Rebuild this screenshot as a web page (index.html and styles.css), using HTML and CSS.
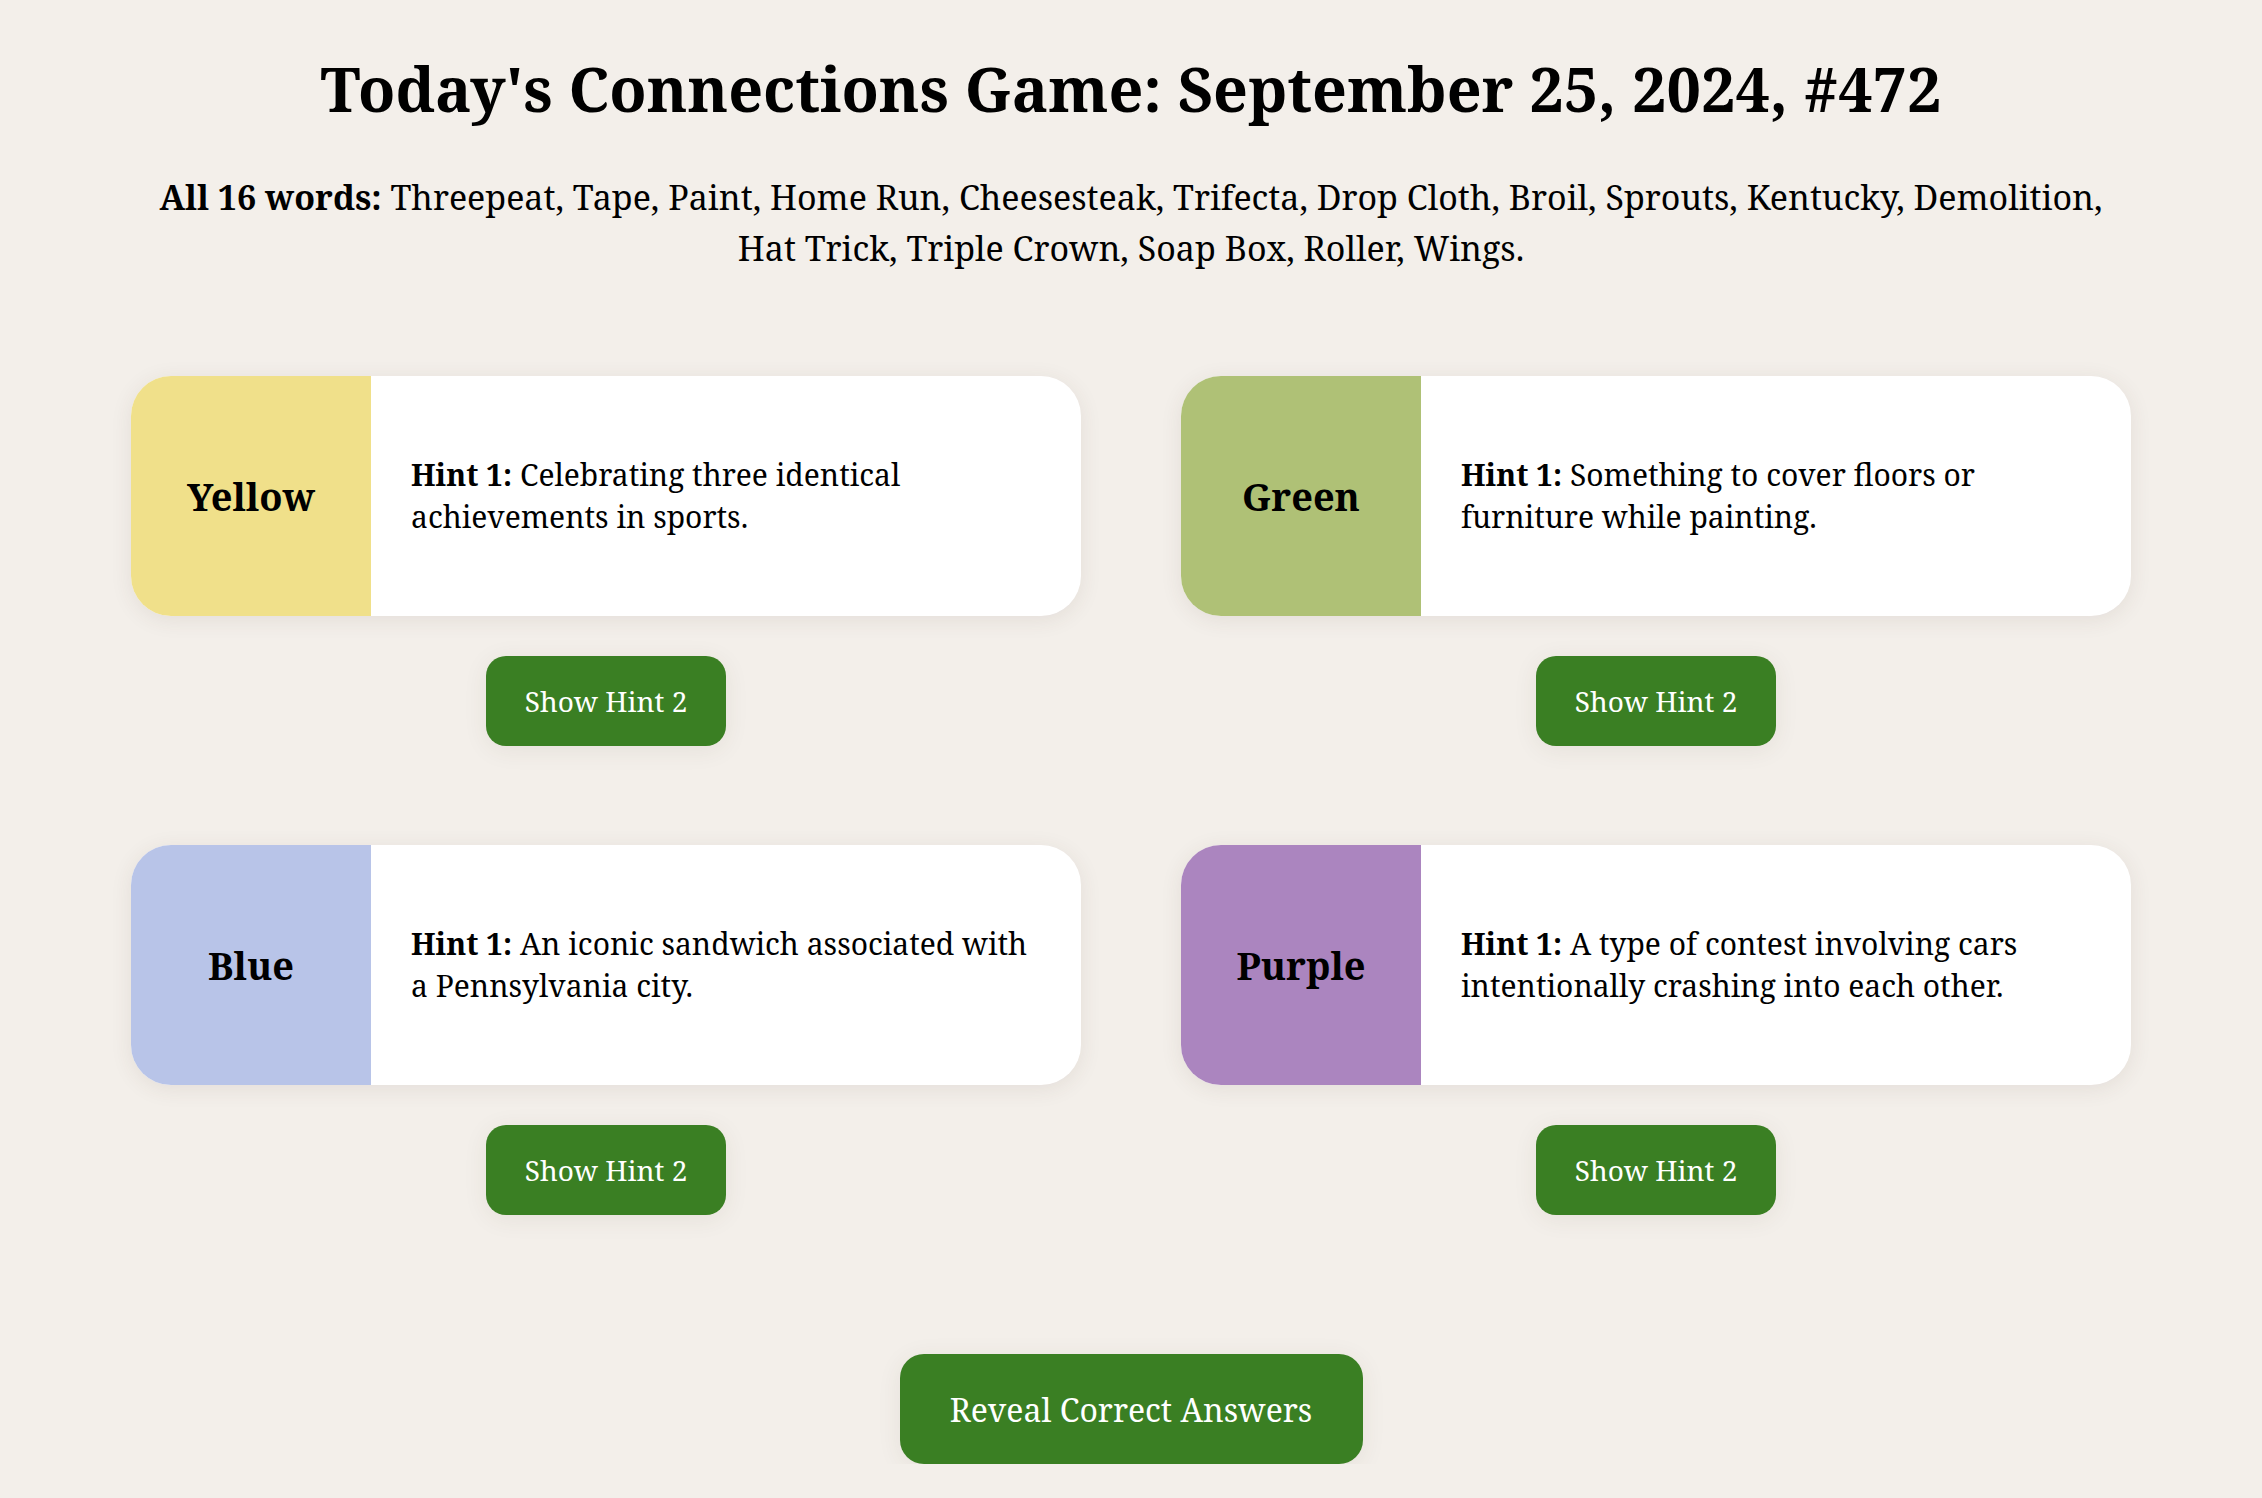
FILE: index.html
```html
<!DOCTYPE html>
<html lang="en">
<head>
    <meta charset="UTF-8">
    <meta name="viewport" content="width=device-width, initial-scale=1.0">
    <title>Connections Hints</title>
    <link rel="stylesheet" href="styles.css">
</head>
<body>
    <main class="page">
        <h1>Today's Connections Game: September 25, 2024, #472</h1>
        <p class="words"><strong>All 16 words:</strong> Threepeat, Tape, Paint, Home Run, Cheesesteak, Trifecta, Drop Cloth, Broil, Sprouts, Kentucky, Demolition, Hat Trick, Triple Crown, Soap Box, Roller, Wings.</p>

        <div class="groups">
            <div class="group">
                <div class="card">
                    <div class="label yellow">Yellow</div>
                    <p class="hint"><strong>Hint 1:</strong> Celebrating three identical achievements in sports.</p>
                </div>
                <button class="btn">Show Hint 2</button>
            </div>
            <div class="group">
                <div class="card">
                    <div class="label green">Green</div>
                    <p class="hint"><strong>Hint 1:</strong> Something to cover floors or furniture while painting.</p>
                </div>
                <button class="btn">Show Hint 2</button>
            </div>
            <div class="group">
                <div class="card">
                    <div class="label blue">Blue</div>
                    <p class="hint"><strong>Hint 1:</strong> An iconic sandwich associated with a Pennsylvania city.</p>
                </div>
                <button class="btn">Show Hint 2</button>
            </div>
            <div class="group">
                <div class="card">
                    <div class="label purple">Purple</div>
                    <p class="hint"><strong>Hint 1:</strong> A type of contest involving cars intentionally crashing into each other.</p>
                </div>
                <button class="btn">Show Hint 2</button>
            </div>
        </div>

        <div class="reveal">
            <button class="btn btn-large">Reveal Correct Answers</button>
        </div>
    </main>
</body>
</html>
```
FILE: styles.css
```css
body {
    font-family: "Noto Serif", "Liberation Serif", serif;
    margin: 0;
    padding: 0;
    background-color: #f3efea;
    color: #000;
}

.page {
    max-width: 2000px;
    margin: 0 auto;
    padding-top: 52px;
}

h1 {
    margin: 0;
    font-size: 61px;
    line-height: 1.2;
    font-weight: 700;
    text-align: center;
}

.words {
    margin: 47px 0 0;
    font-size: 34px;
    line-height: 51px;
    text-align: center;
}

.groups {
    display: grid;
    grid-template-columns: 1fr 1fr;
    column-gap: 100px;
    row-gap: 99px;
    margin-top: 102px;
}

.group {
    display: flex;
    flex-direction: column;
    align-items: center;
    gap: 40px;
}

.card {
    display: flex;
    width: 100%;
    height: 240px;
    background: #fff;
    border-radius: 40px;
    overflow: hidden;
    box-shadow: 0 4px 22px rgba(80, 60, 40, 0.09);
}

.label {
    flex: 0 0 240px;
    display: flex;
    align-items: center;
    justify-content: center;
    font-size: 38px;
    font-weight: 700;
}

.yellow { background-color: #f0e08a; }
.green { background-color: #afc176; }
.blue { background-color: #b8c4e8; }
.purple { background-color: #ab85bf; }

.hint {
    align-self: center;
    margin: 0;
    padding: 0 40px;
    max-width: 625px;
    font-size: 30px;
    line-height: 42px;
}

.btn {
    font-family: inherit;
    width: 240px;
    height: 90px;
    background-color: #3a7f23;
    color: #fff;
    border: none;
    border-radius: 20px;
    font-size: 28px;
    cursor: pointer;
    box-shadow: 0 4px 24px rgba(80, 60, 40, 0.08);
}

.btn:hover {
    background-color: #326f1e;
}

.reveal {
    display: flex;
    justify-content: center;
    margin-top: 139px;
}

.btn-large {
    width: 463px;
    height: 110px;
    border-radius: 24px;
    font-size: 32px;
}
```
